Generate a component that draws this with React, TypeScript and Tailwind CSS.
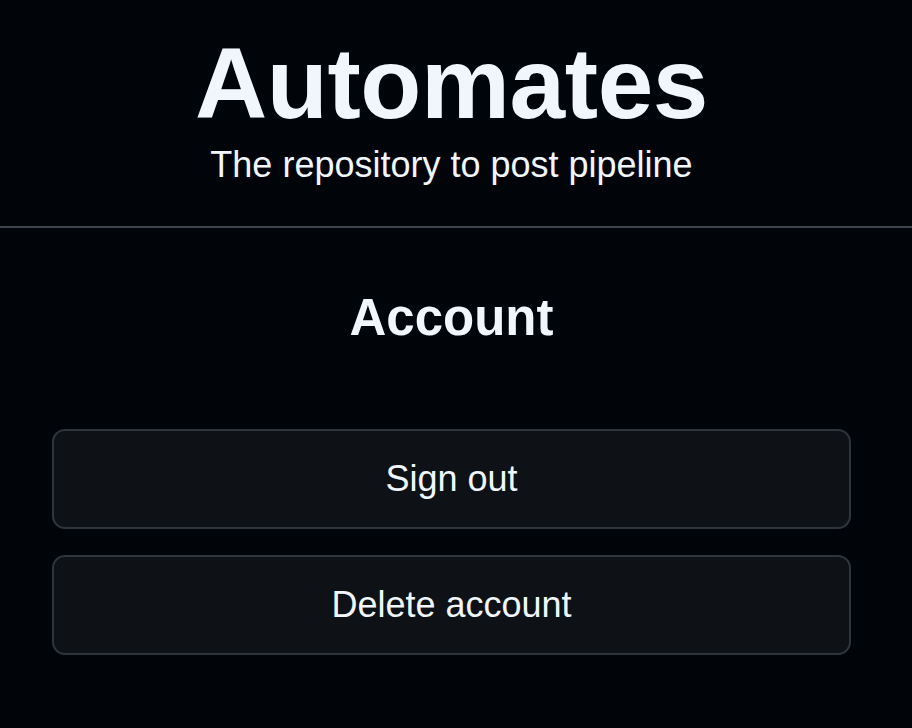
export default function App() {
  const actions = ['Sign out', 'Delete account'];

  return (
    <div
      className="min-h-screen w-full bg-[#010409] text-[#f0f6fc]"
      style={{ fontFamily: '"Liberation Sans", Arial, Helvetica, sans-serif' }}
    >
      {/* Header */}
      <header className="border-b-2 border-[#3d444d]">
        <div className="w-[903px] pt-[33px] pb-[40px] text-center">
          <h1 className="text-[100px] font-bold leading-none tracking-[-0.4px]">Automates</h1>
          <p className="mt-[10px] text-[36px] leading-[1.2]">The repository to post pipeline</p>
        </div>
      </header>

      {/* Account */}
      <main className="w-[903px] px-[52px] pt-[59px]">
        <h2 className="text-center text-[51px] font-bold leading-[1.2]">Account</h2>
        <div className="mt-[81px] flex flex-col gap-[26px]">
          {actions.map((label) => (
            <button
              key={label}
              className="h-[100px] w-full rounded-[13px] border-2 border-[#2f353d] bg-[#0e1116] text-[36px] text-[#f0f6fc]"
            >
              {label}
            </button>
          ))}
        </div>
      </main>
    </div>
  );
}
